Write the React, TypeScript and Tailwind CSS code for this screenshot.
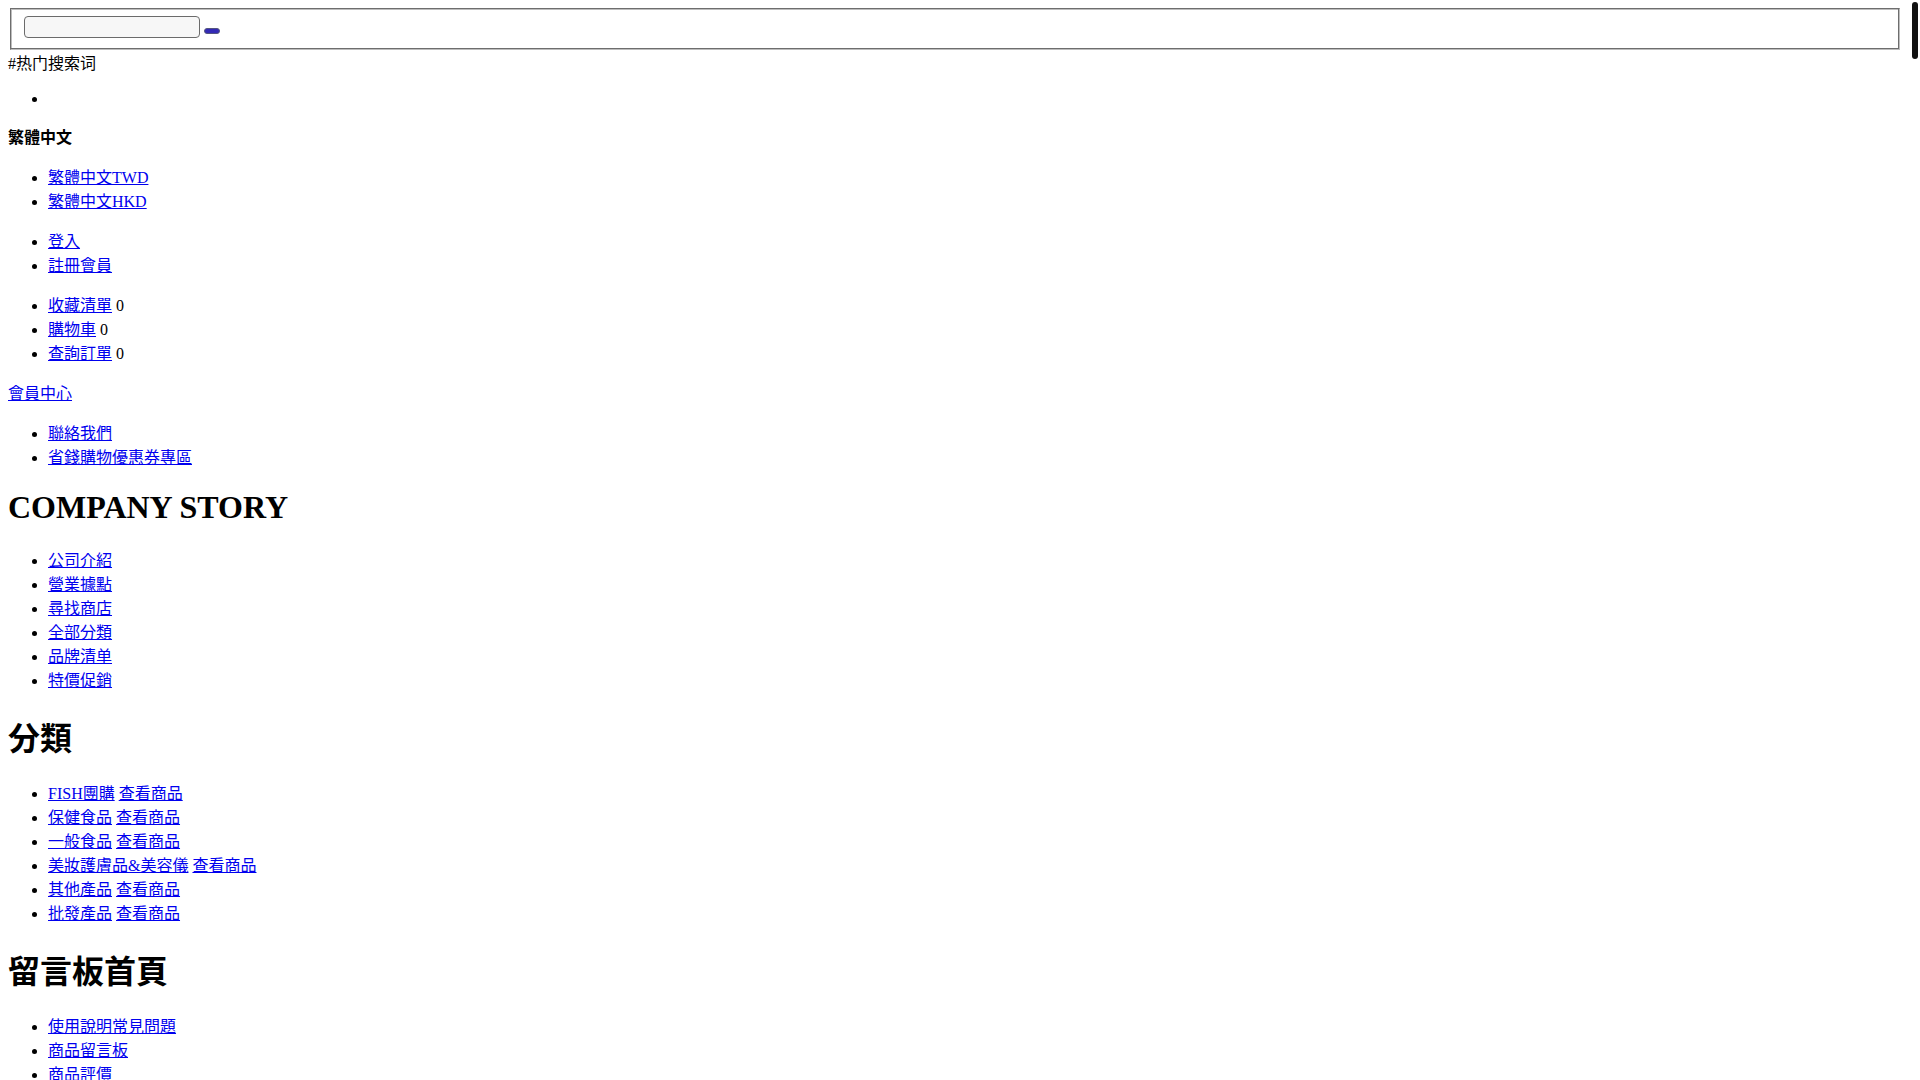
import clsx from 'clsx';

type LinkItem = {
  label: string;
  count?: number;
  more?: string;
};

const languages: LinkItem[] = [{ label: '繁體中文TWD' }, { label: '繁體中文HKD' }];

const account: LinkItem[] = [{ label: '登入' }, { label: '註冊會員' }];

const shopping: LinkItem[] = [
  { label: '收藏清單', count: 0 },
  { label: '購物車', count: 0 },
  { label: '查詢訂單', count: 0 },
];

const service: LinkItem[] = [{ label: '聯絡我們' }, { label: '省錢購物優惠券專區' }];

const company: LinkItem[] = [
  { label: '公司介紹' },
  { label: '營業據點' },
  { label: '尋找商店' },
  { label: '全部分類' },
  { label: '品牌清单' },
  { label: '特價促銷' },
];

const categories: LinkItem[] = [
  { label: 'FISH團購', more: '查看商品' },
  { label: '保健食品', more: '查看商品' },
  { label: '一般食品', more: '查看商品' },
  { label: '美妝護膚品&美容儀', more: '查看商品' },
  { label: '其他產品', more: '查看商品' },
  { label: '批發產品', more: '查看商品' },
];

const board: LinkItem[] = [
  { label: '使用說明常見問題' },
  { label: '商品留言板' },
  { label: '商品評價' },
];

function TextLink({ children }: { children: string }) {
  return (
    <a href="#" className="text-[#0000ee] underline">
      {children}
    </a>
  );
}

function LinkList({ items }: { items: LinkItem[] }) {
  return (
    <ul className="my-4 list-disc pl-10">
      {items.map((item) => (
        <li key={item.label}>
          <TextLink>{item.label}</TextLink>
          {item.count !== undefined && <> {item.count}</>}
          {item.more && (
            <>
              {' '}
              <TextLink>{item.more}</TextLink>
            </>
          )}
        </li>
      ))}
    </ul>
  );
}

function Heading({ children, latin }: { children: string; latin?: boolean }) {
  return (
    <h1 className={clsx('mb-[21px] text-[32px] font-bold', latin ? 'mt-[21px]' : 'mt-[22px]')}>
      {children}
    </h1>
  );
}

function SearchBar() {
  return (
    <form onSubmit={(e) => e.preventDefault()}>
      <fieldset className="mx-0.5 flex items-end gap-1 border border-t-[#6e6e6e] border-r-[#bdbdbd] border-b-[#bdbdbd] border-l-[#6e6e6e] px-[13px] pt-[7px] pb-[11px] shadow-[inset_-1px_-1px_0_#6e6e6e,inset_1px_1px_0_#bdbdbd]">
        <input
          type="text"
          name="keyword"
          aria-label="搜索"
          className="h-[22px] w-44 rounded-[4px] border border-[#6b6b6b] bg-[#f7f7f7] px-1 text-sm"
        />
        <button
          type="submit"
          aria-label="搜索"
          className="mb-1 h-1.5 w-4 rounded-[3px] border border-[#555580] bg-[#3329b5]"
        />
      </fieldset>
    </form>
  );
}

export default function App() {
  return (
    <div className="h-screen overflow-hidden bg-white pt-2 pr-[18px] pl-2 font-['Liberation_Serif','Noto_Sans_CJK_JP',serif] text-[16px] text-black [line-height:normal]">
      <SearchBar />
      <div>#热门搜索词</div>
      <ul className="my-4 list-disc pl-10">
        <li className="h-[18px]" />
      </ul>

      <div className="font-bold">繁體中文</div>
      <LinkList items={languages} />
      <LinkList items={account} />
      <LinkList items={shopping} />
      <div>
        <TextLink>會員中心</TextLink>
      </div>
      <LinkList items={service} />

      <Heading latin>COMPANY STORY</Heading>
      <LinkList items={company} />

      <Heading>分類</Heading>
      <LinkList items={categories} />

      <Heading>留言板首頁</Heading>
      <LinkList items={board} />

      <div className="fixed top-0.5 right-0.5 h-[57px] w-1.5 rounded-full bg-[#111111]" />
    </div>
  );
}
